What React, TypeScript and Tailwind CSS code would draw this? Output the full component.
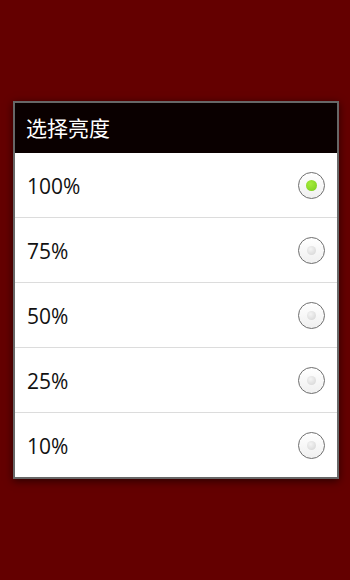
import React from "react";

const options = ["100%", "75%", "50%", "25%", "10%"];

function Radio({ checked }: { checked: boolean }) {
  return (
    <div className="w-[27px] h-[27px] rounded-full border-[1.5px] border-[#6e6e6e] bg-gradient-to-b from-white to-[#f0f0f0] flex items-center justify-center">
      {checked ? (
        <div className="w-[11px] h-[11px] rounded-full bg-[radial-gradient(circle_at_40%_35%,#a6ec3c,#78cc1c)]" />
      ) : (
        <div className="w-[9px] h-[9px] rounded-full bg-[radial-gradient(circle_at_40%_35%,#f4f4f4,#d2d2d2)]" />
      )}
    </div>
  );
}

export default function App() {
  return (
    <div className="w-[350px] h-[580px] bg-[#640000] pt-[101px] pl-[13px]" style={{ fontFamily: '"Open Sans", "Noto Sans CJK SC", sans-serif' }}>
      <div className="w-[326px] border-2 border-[#676767] bg-white shadow-[0_2px_8px_rgba(0,0,0,0.6)]">
        {/* Title */}
        <div className="h-[50px] bg-[#0a0000] flex items-center pl-[11px] text-white text-[21px]" style={{ fontFamily: '"Noto Sans CJK SC", sans-serif' }}>
          选择亮度
        </div>

        {/* Options */}
        {options.map((o, i) => (
          <div
            key={o}
            className={`flex items-center justify-between pl-[12px] pr-[12px] text-[21px] text-[#111] ${
              i < options.length - 1 ? "h-[65px] border-b border-[#dcdcdc]" : "h-[64px]"
            }`}
          >
            <span className="pt-[3px]">{o}</span>
            <Radio checked={i === 0} />
          </div>
        ))}
      </div>
    </div>
  );
}
